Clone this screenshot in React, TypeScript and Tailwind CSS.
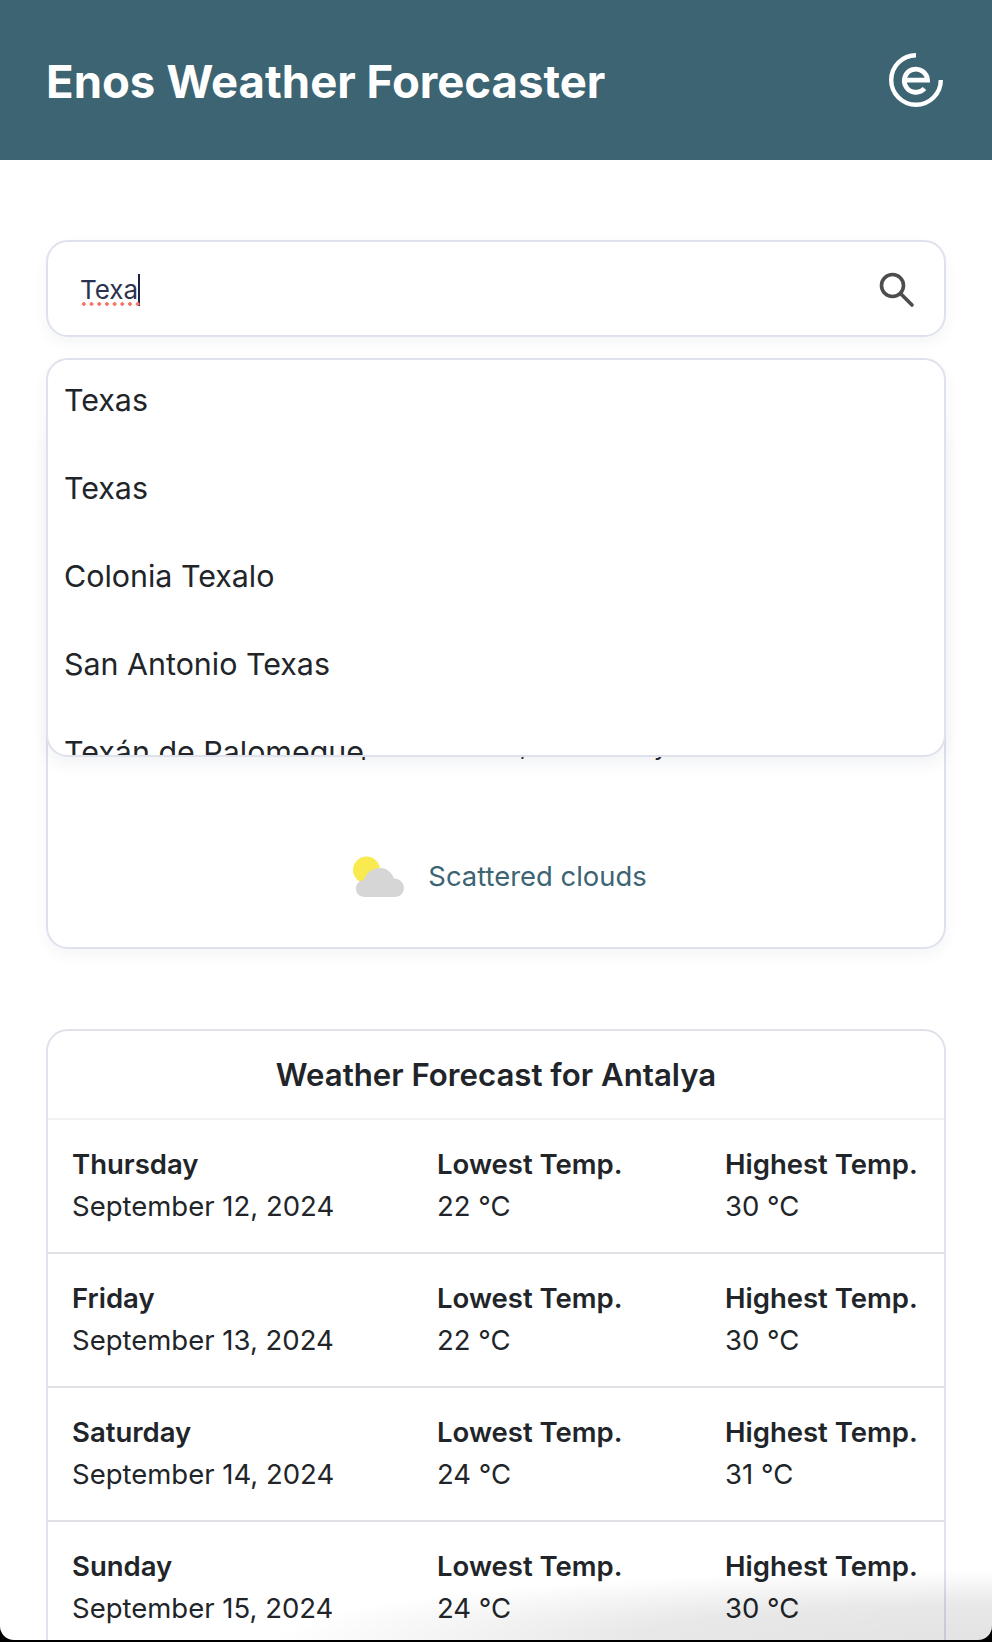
const suggestions = ["Texas", "Texas", "Colonia Texalo", "San Antonio Texas", "Texán de Palomeque"];

const forecast = [
  { day: "Thursday", date: "September 12, 2024", low: 22, high: 30 },
  { day: "Friday", date: "September 13, 2024", low: 22, high: 30 },
  { day: "Saturday", date: "September 14, 2024", low: 24, high: 31 },
  { day: "Sunday", date: "September 15, 2024", low: 24, high: 30 },
];

function Logo() {
  return (
    <svg width="54" height="54" viewBox="0 0 54 54" fill="none" stroke="white" className="shrink-0">
      <path d="M27 2.2A24.8 24.8 0 1 0 51.8 27" strokeWidth="4.4" />
      <path d="M15.5 27.2H38.5A11.6 11.6 0 1 0 35.5 35.5" strokeWidth="4.8" />
    </svg>
  );
}

function SearchIcon() {
  return (
    <svg width="40" height="40" viewBox="0 0 40 40" fill="none" stroke="#4d4d4d" strokeWidth="3.6" className="shrink-0">
      <circle cx="16.5" cy="16.5" r="11" />
      <path d="M24.5 24.5L36 36" strokeLinecap="round" />
    </svg>
  );
}

function CloudIcon() {
  return (
    <svg width="64" height="64" viewBox="0 0 64 64" className="shrink-0">
      <circle cx="21.5" cy="26" r="13.5" fill="#f9ea4f" />
      <path
        d="M20 53C14 53 11 49 11 44.5C11 40 14 36.5 19 36C21 29 27 24 35 24C42 24 47 29 49 34.5C55 34.5 59 39 59 44C59 49 55 53 50 53Z"
        fill="#d6d6d6"
      />
    </svg>
  );
}

export default function App() {
  return (
    <div className="h-[1642px] overflow-hidden bg-black font-['Inter',sans-serif] text-[#212529]">
      <div className="relative h-[1640px] overflow-hidden rounded-b-[14px] bg-white">
        <header className="flex h-[160px] items-center justify-between bg-[#3c6472] pr-[49px] pl-[46px]">
          <h1 className="pt-[4px] text-[45.5px] font-bold text-white">Enos Weather Forecaster</h1>
          <Logo />
        </header>

        <main className="px-[46px] pt-[80px]">
          <div className="relative z-10">
            <div className="flex h-[97px] items-center justify-between rounded-[22px] border-2 border-[#dfe1ec] bg-white pr-[28px] pl-[32px] shadow-[0_6px_14px_rgba(40,50,90,0.05)]">
              <div className="relative flex h-[32px] translate-y-[1px] items-center text-[26px] text-[#2c3350]">
                <span>Texa</span>
                <span className="h-[32px] w-[2px] bg-[#1c2245]" />
                <span className="absolute top-[28px] left-0 h-[4px] w-[60px] bg-[radial-gradient(circle,#f8776b_1.6px,transparent_1.7px)] bg-[length:7.7px_4px]" />
              </div>
              <SearchIcon />
            </div>

            <div className="absolute top-[118px] right-0 left-0 h-[399px] overflow-hidden rounded-[22px] border-2 border-[#dfe1ec] bg-white shadow-[0_8px_16px_rgba(40,50,90,0.06)]">
              {suggestions.map((s, i) => (
                <div key={i} className="flex h-[88px] items-center pb-[8px] pl-[16px] text-[30.4px] leading-none">
                  {s}
                </div>
              ))}
            </div>
          </div>

          <section className="mt-[79px] flex h-[533px] flex-col items-center rounded-[22px] border-2 border-[#dfe1ec] bg-white pt-[309px] shadow-[0_6px_14px_rgba(40,50,90,0.05)]">
            <p className="ml-[59px] flex gap-[34px] text-[25.6px]">
              <span className="tracking-[-0.9px]">Temperature 29°C,</span>
              <span>Humidity: 60%</span>
            </p>
            <div className="mt-[79px] flex items-center gap-[19px]">
              <CloudIcon />
              <span className="text-[27.4px] text-[#3c6472]">Scattered clouds</span>
            </div>
          </section>

          <section className="mt-[80px] rounded-t-[22px] border-2 border-[#dfe1ec]">
            <h2 className="flex h-[89px] items-center justify-center border-b-2 border-[#f1f2f4] pt-[2px] text-[31.2px] font-semibold">
              Weather Forecast for Antalya
            </h2>
            {forecast.map((f) => (
              <div
                key={f.day}
                className="grid h-[134px] grid-cols-[365px_288px_1fr] content-center border-b-2 border-[#e0e1e6] pl-[24px] text-[27.5px] leading-[41.6px]"
              >
                <div>
                  <div className="font-semibold">{f.day}</div>
                  <div>{f.date}</div>
                </div>
                <div>
                  <div className="font-semibold">Lowest Temp.</div>
                  <div>{f.low} °C</div>
                </div>
                <div>
                  <div className="font-semibold">Highest Temp.</div>
                  <div>{f.high} °C</div>
                </div>
              </div>
            ))}
          </section>
        </main>

        <div className="pointer-events-none absolute right-0 bottom-0 h-[70px] w-[720px] bg-[radial-gradient(ellipse_100%_100%_at_100%_100%,rgba(0,0,0,0.11),rgba(0,0,0,0.09)_50%,transparent_100%)]" />
      </div>
    </div>
  );
}
